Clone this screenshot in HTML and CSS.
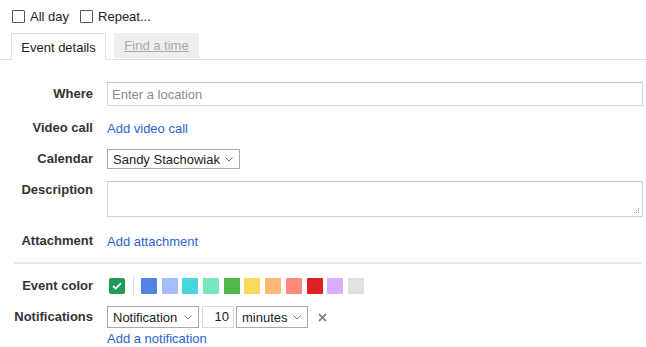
FILE: index.html
```html
<!doctype html>
<html lang="en">
  <head>
    <meta charset="UTF-8" />
    <title>Event details</title>
    <link rel="stylesheet" href="styles.css">
  </head>
  <body>
    <div class="checks">
      <label class="check"><span class="box"></span>All day</label>
      <label class="check"><span class="box"></span>Repeat...</label>
    </div>

    <div class="tabs">
      <div class="tab tab-active">Event details</div>
      <div class="tab tab-off"><span>Find a time</span></div>
    </div>

    <div class="form">
      <div class="row row-where">
        <div class="label">Where</div>
        <div class="field field-wide">Enter a location</div>
      </div>

      <div class="row row-video">
        <div class="label">Video call</div>
        <a class="link" href="#">Add video call</a>
      </div>

      <div class="row row-calendar">
        <div class="label">Calendar</div>
        <div class="select select-calendar">
          <span>Sandy Stachowiak</span>
          <svg class="chev" width="8" height="5" viewBox="0 0 8 5"><polyline points="0.5,0.5 4,4 7.5,0.5" fill="none" stroke="#777" stroke-width="1"/></svg>
        </div>
      </div>

      <div class="row row-desc">
        <div class="label">Description</div>
        <div class="textarea">
          <svg class="grip" width="7" height="7" viewBox="0 0 7 7" fill="#999">
            <rect x="5" y="1" width="1" height="1"/>
            <rect x="3" y="3" width="1" height="1"/><rect x="5" y="3" width="1" height="1"/>
            <rect x="1" y="5" width="1" height="1"/><rect x="3" y="5" width="1" height="1"/><rect x="5" y="5" width="1" height="1"/>
          </svg>
        </div>
      </div>

      <div class="row row-attach">
        <div class="label">Attachment</div>
        <a class="link" href="#">Add attachment</a>
      </div>

      <div class="divider"></div>

      <div class="row row-color">
        <div class="label">Event color</div>
        <div class="swatches">
          <span class="swatch swatch-on">
            <svg width="10" height="8" viewBox="0 0 10 8"><polyline points="1,4 3.8,6.6 9,1.2" fill="none" stroke="#fff" stroke-width="1.8"/></svg>
          </span>
          <span class="sep"></span>
          <span class="swatch c1"></span>
          <span class="swatch c2"></span>
          <span class="swatch c3"></span>
          <span class="swatch c4"></span>
          <span class="swatch c5"></span>
          <span class="swatch c6"></span>
          <span class="swatch c7"></span>
          <span class="swatch c8"></span>
          <span class="swatch c9"></span>
          <span class="swatch c10"></span>
          <span class="swatch c11"></span>
        </div>
      </div>

      <div class="row row-notif">
        <div class="label">Notifications</div>
        <div class="select select-type">
          <span>Notification</span>
          <svg class="chev" width="8" height="5" viewBox="0 0 8 5"><polyline points="0.5,0.5 4,4 7.5,0.5" fill="none" stroke="#777" stroke-width="1"/></svg>
        </div>
        <div class="num">10</div>
        <div class="select select-unit">
          <span>minutes</span>
          <svg class="chev" width="8" height="5" viewBox="0 0 8 5"><polyline points="0.5,0.5 4,4 7.5,0.5" fill="none" stroke="#777" stroke-width="1"/></svg>
        </div>
        <svg class="remove" width="9" height="9" viewBox="0 0 9 9"><path d="M1 1 L8 8 M8 1 L1 8" stroke="#8a8a8a" stroke-width="1.8"/></svg>
      </div>

      <div class="row-add">
        <a class="link" href="#">Add a notification</a>
      </div>
    </div>
  </body>
</html>
```

FILE: styles.css
```css
body {
  font-family: "Liberation Sans", Arial, sans-serif;
  font-size: 13px;
  color: #222;
  margin: 0;
  background: white;
}
.checks {
  display: flex;
  padding: 8px 0 0 12px;
  height: 16px;
}
.check {
  display: flex;
  align-items: center;
  margin-right: 11px;
  color: #222;
}
.box {
  width: 11px;
  height: 11px;
  border: 1px solid #555;
  border-radius: 1px;
  margin-right: 5px;
}
.tabs {
  display: flex;
  margin-top: 9px;
  padding-left: 11px;
  border-bottom: 1px solid #e2e2e2;
  height: 26px;
}
.tab {
  display: flex;
  align-items: center;
  justify-content: center;
  box-sizing: border-box;
}
.tab-active {
  width: 95px;
  height: 27px;
  border: 1px solid #e0e0e0;
  border-bottom: none;
  background: white;
  color: #222;
}
.tab-off {
  width: 85px;
  height: 25px;
  margin-left: 8px;
  background: #eeeeee;
  color: #a8a8a8;
}
.tab-off span {
  text-decoration: underline;
}
.form {
  padding: 22px 3px 0 0;
}
.row {
  display: flex;
  align-items: center;
}
.label {
  width: 93px;
  margin-right: 14px;
  flex-shrink: 0;
  text-align: right;
  font-weight: bold;
  color: #333;
  line-height: 16px;
}
.link {
  color: #2b63cf;
  text-decoration: none;
}
.field {
  box-sizing: border-box;
  height: 24px;
  border: 1px solid #d4d4d4;
  border-top-color: #c4c4c4;
  padding-left: 4px;
  display: flex;
  align-items: center;
  color: #8a8a8a;
}
.field-wide {
  flex: 1;
}
.row-where {
  height: 24px;
  margin-bottom: 11px;
}
.row-video {
  height: 22px;
  margin-bottom: 9px;
}
.row-calendar {
  height: 22px;
  margin-bottom: 11px;
}
.select {
  box-sizing: border-box;
  display: flex;
  align-items: center;
  justify-content: space-between;
  border: 1px solid #a9a9a9;
  padding: 0 6px 0 5px;
  color: #222;
  background: white;
}
.select-calendar {
  width: 133px;
  height: 20px;
}
.chev {
  flex-shrink: 0;
}
.row-desc {
  height: 36px;
  align-items: flex-start;
  margin-bottom: 13px;
}
.row-desc .label {
  padding-top: 1px;
}
.textarea {
  flex: 1;
  box-sizing: border-box;
  height: 36px;
  border: 1px solid #d4d4d4;
  border-top-color: #c4c4c4;
  position: relative;
}
.grip {
  position: absolute;
  right: 2px;
  bottom: 2px;
}
.row-attach {
  height: 22px;
}
.divider {
  height: 2px;
  background: #e4e4e4;
  margin: 10px 1px 12px 14px;
}
.row-color {
  height: 20px;
  margin-bottom: 9px;
}
.swatches {
  display: flex;
  align-items: center;
  margin-left: 2px;
}
.swatch {
  width: 16px;
  height: 16px;
  border-radius: 1px;
  margin-right: 4.7px;
}
.swatch-on {
  background: #1f9a57;
  border-radius: 2px;
  display: flex;
  align-items: center;
  justify-content: center;
  margin-right: 0;
}
.sep {
  width: 1px;
  height: 18px;
  background: #dcdcdc;
  margin: 0 7px 0 8px;
}
.c1 { background: #5083e6; }
.c2 { background: #a4bdfc; }
.c3 { background: #46d6db; }
.c4 { background: #7ae7bf; }
.c5 { background: #51b749; }
.c6 { background: #fbd75b; }
.c7 { background: #ffb878; }
.c8 { background: #ff887c; }
.c9 { background: #dc2127; }
.c10 { background: #dbadff; }
.c11 { background: #e1e1e1; }
.row-notif {
  height: 24px;
}
.select-type {
  width: 92px;
  height: 22px;
}
.num {
  box-sizing: border-box;
  width: 32px;
  height: 22px;
  margin-left: 3px;
  border: 1px solid #dcdcdc;
  text-align: right;
  padding-right: 4px;
  line-height: 20px;
}
.select-unit {
  width: 72px;
  height: 22px;
  margin-left: 2px;
}
.remove {
  margin-left: 10px;
}
.row-add {
  padding-left: 107px;
  height: 20px;
  line-height: 20px;
}
```
